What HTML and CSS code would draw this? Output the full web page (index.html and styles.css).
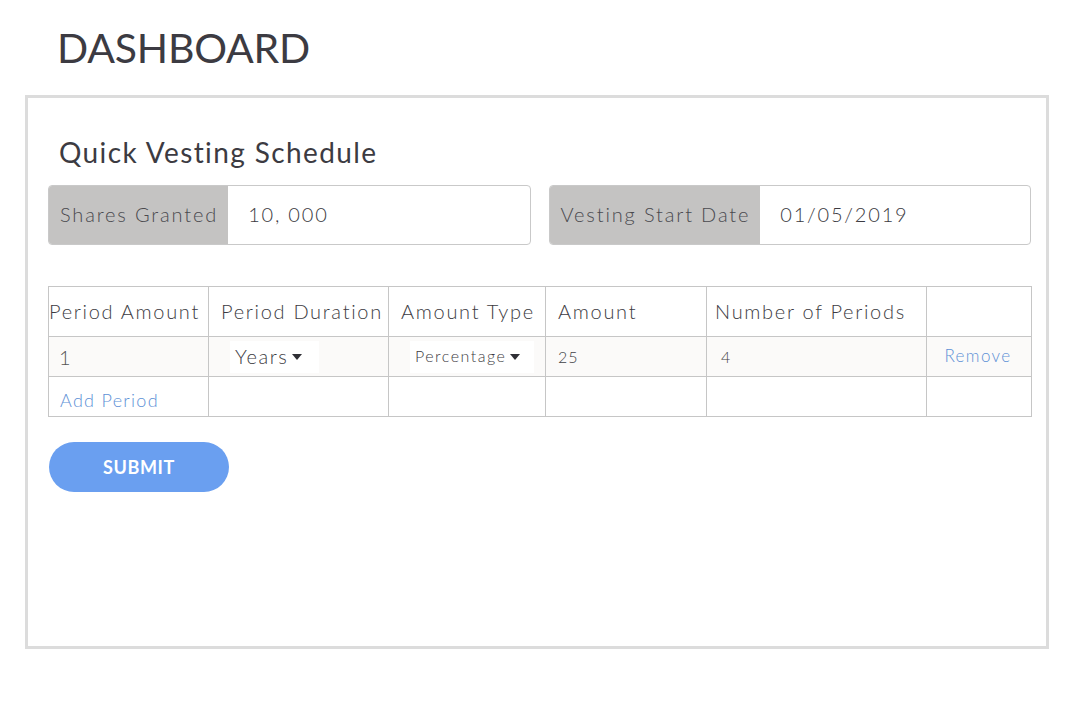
FILE: index.html
```html
<!DOCTYPE html>
<html>
<head>
<meta charset="utf-8">
<link rel="stylesheet" href="styles.css">
</head>
<body>
<h1 class="page-title">DASHBOARD</h1>
<div class="card">
  <h2 class="card-title">Quick Vesting Schedule</h2>
  <div class="inputs">
    <div class="input-group">
      <div class="ig-label">Shares Granted</div>
      <div class="ig-value">10, 000</div>
    </div>
    <div class="input-group">
      <div class="ig-label">Vesting Start Date</div>
      <div class="ig-value">01/05/2019</div>
    </div>
  </div>
  <table class="periods">
    <colgroup>
      <col class="c1"><col class="c2"><col class="c3"><col class="c4"><col class="c5"><col class="c6">
    </colgroup>
    <thead>
      <tr>
        <th class="first">Period Amount</th>
        <th>Period Duration</th>
        <th>Amount Type</th>
        <th>Amount</th>
        <th class="h5">Number of Periods</th>
        <th></th>
      </tr>
    </thead>
    <tbody>
      <tr class="data-row">
        <td class="num-one">1</td>
        <td class="sel-cell"><span class="select sel-years">Years<span class="caret"></span></span></td>
        <td class="sel-cell"><span class="select sel-pct">Percentage<span class="caret"></span></span></td>
        <td class="small">25</td>
        <td class="small four">4</td>
        <td class="remove"><a>Remove</a></td>
      </tr>
      <tr class="add-row">
        <td class="add"><a>Add Period</a></td>
        <td></td><td></td><td></td><td></td><td></td>
      </tr>
    </tbody>
  </table>
  <button class="submit">SUBMIT</button>
</div>
</body>
</html>
```

FILE: styles.css
```css
* { box-sizing: border-box; }
body {
  margin: 0;
  background: #ffffff;
  font-family: "Lato", "Open Sans", sans-serif;
  color: #3c3b42;
}
.page-title {
  margin: 0;
  padding: 27px 0 0 57px;
  height: 95px;
  font-size: 41px;
  font-weight: 400;
  letter-spacing: -0.2px;
  color: #3c3b42;
  line-height: 42px;
}
.card {
  margin: 0 0 0 25px;
  width: 1024px;
  height: 554px;
  border: 3px solid #dcdcdc;
  padding: 0 15px 0 20px;
}
.card-title {
  margin: 0;
  padding: 37px 0 0 11px;
  height: 87px;
  font-size: 28px;
  font-weight: 400;
  letter-spacing: 1.4px;
  line-height: 34px;
  color: #3c3b42;
}
.inputs {
  display: flex;
  gap: 18px;
}
.input-group {
  flex: 1;
  display: flex;
  height: 60px;
  border: 1px solid #c9c9c9;
  border-radius: 4px;
  overflow: hidden;
}
.ig-label {
  background: #c4c3c2;
  display: flex;
  align-items: center;
  padding: 0 10px 3px 11px;
  font-size: 20px;
  font-weight: 300;
  letter-spacing: 1.85px;
  color: #4a4a4f;
}
.ig-value {
  display: flex;
  align-items: center;
  padding: 0 20px 3px;
  font-size: 20px;
  font-weight: 300;
  letter-spacing: 1.8px;
  color: #3c3b42;
}
.periods {
  margin-top: 41px;
  width: 983px;
  border-collapse: collapse;
  table-layout: fixed;
}
.c1 { width: 160px; }
.c2 { width: 180px; }
.c3 { width: 157px; }
.c4 { width: 161px; }
.c5 { width: 220px; }
.c6 { width: 105px; }
.periods th, .periods td {
  border: 1px solid #c6c6c6;
  padding: 0 0 0 12px;
  text-align: left;
  white-space: nowrap;
}
.periods th {
  height: 50px;
  font-size: 20px;
  font-weight: 300;
  letter-spacing: 1.7px;
  color: #3c3b42;
  padding-top: 0;
  padding-bottom: 2px;
}
.periods th.first { padding-left: 0; }
.periods th.h5 { padding-left: 8px; }
.periods td { height: 40px; }
.data-row td { background: #fbfaf9; }
.num-one {
  font-size: 20px;
  font-weight: 300;
  color: #555;
  padding-left: 10px !important;
}
.sel-cell { padding-left: 21px !important; }
.select {
  display: inline-flex;
  align-items: center;
  background: #ffffff;
  height: 32px;
  padding: 0 0 2px 5px;
  color: #3c3b42;
  font-weight: 300;
}
.sel-years { width: 89px; font-size: 20px; letter-spacing: 1.6px; }
.sel-pct { width: 124px; font-size: 16px; letter-spacing: 1.5px; }
.caret {
  display: inline-block;
  width: 0; height: 0;
  margin-left: 4px;
  border-left: 5.5px solid transparent;
  border-right: 5.5px solid transparent;
  border-top: 6px solid #2f2f35;
  margin-top: 2px;
}
.small {
  font-size: 16px;
  font-weight: 300;
  letter-spacing: 1px;
  color: #3f3f45;
}
.four { padding-left: 14px !important; }
.remove {
  text-align: center !important;
  padding: 0 2px 2px 0 !important;
  font-size: 17px;
  font-weight: 300;
  letter-spacing: 1.4px;
  color: #5e91d6;
}
.add {
  font-size: 18px;
  font-weight: 300;
  letter-spacing: 1.3px;
  color: #5e91d6;
  padding-left: 11px !important;
  padding-top: 6px !important;
}
.submit {
  margin-top: 25px;
  margin-left: 1px;
  width: 180px;
  height: 50px;
  border: none;
  border-radius: 25px;
  background: #6a9ff0;
  color: #ffffff;
  font-family: "Lato", sans-serif;
  font-weight: 700;
  font-size: 18px;
  letter-spacing: 0.6px;
}
```
